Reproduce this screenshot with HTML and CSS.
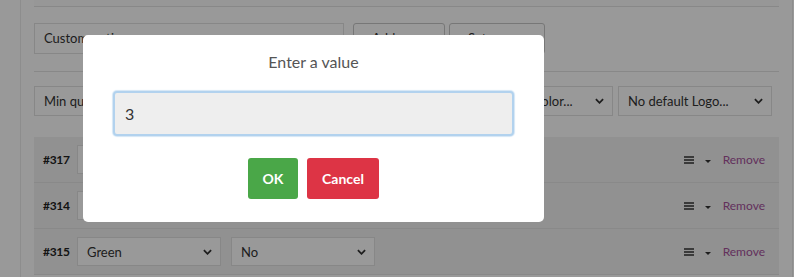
FILE: index.html
```html
<!DOCTYPE html>
<html lang="en">
<head>
    <meta charset="UTF-8">
    <title>Options</title>
    <link rel="stylesheet" href="styles.css">
</head>
<body>
<div class="page">
    <div class="top-box"></div>

    <div class="add-row">
        <div class="field custom">Custom option name</div>
        <div class="btn-ghost add">Add bullet</div>
        <div class="btn-ghost sub">Set defaults</div>
    </div>

    <div class="defaults">
        <div class="pick w1"><span>Min quantity...</span><svg class="chev" viewBox="0 0 10 6"><path d="M1 1l4 4 4-4" /></svg></div>
        <div class="pick w2"><span>No default Size...</span><svg class="chev" viewBox="0 0 10 6"><path d="M1 1l4 4 4-4" /></svg></div>
        <div class="pick w3"><span>No default Color...</span><svg class="chev" viewBox="0 0 10 6"><path d="M1 1l4 4 4-4" /></svg></div>
        <div class="pick w3"><span>No default Logo...</span><svg class="chev" viewBox="0 0 10 6"><path d="M1 1l4 4 4-4" /></svg></div>
    </div>

    <div class="list">
        <div class="item">
            <b class="num">#317</b>
            <div class="pick small"><span>Red</span><svg class="chev" viewBox="0 0 10 6"><path d="M1 1l4 4 4-4" /></svg></div>
            <div class="pick small"><span>Yes</span><svg class="chev" viewBox="0 0 10 6"><path d="M1 1l4 4 4-4" /></svg></div>
            <div class="tools">
                <svg class="burger" viewBox="0 0 10 8"><path d="M0 1h10M0 4h10M0 7h10" /></svg>
                <svg class="caret" viewBox="0 0 6 4"><path d="M0 0h6L3 3z" /></svg>
                <a href="#" class="remove">Remove</a>
            </div>
        </div>
        <div class="item">
            <b class="num">#314</b>
            <div class="pick small"><span>Blue</span><svg class="chev" viewBox="0 0 10 6"><path d="M1 1l4 4 4-4" /></svg></div>
            <div class="pick small"><span>No</span><svg class="chev" viewBox="0 0 10 6"><path d="M1 1l4 4 4-4" /></svg></div>
            <div class="tools">
                <svg class="burger" viewBox="0 0 10 8"><path d="M0 1h10M0 4h10M0 7h10" /></svg>
                <svg class="caret" viewBox="0 0 6 4"><path d="M0 0h6L3 3z" /></svg>
                <a href="#" class="remove">Remove</a>
            </div>
        </div>
        <div class="item">
            <b class="num">#315</b>
            <div class="pick small"><span>Green</span><svg class="chev" viewBox="0 0 10 6"><path d="M1 1l4 4 4-4" /></svg></div>
            <div class="pick small"><span>No</span><svg class="chev" viewBox="0 0 10 6"><path d="M1 1l4 4 4-4" /></svg></div>
            <div class="tools">
                <svg class="burger" viewBox="0 0 10 8"><path d="M0 1h10M0 4h10M0 7h10" /></svg>
                <svg class="caret" viewBox="0 0 6 4"><path d="M0 0h6L3 3z" /></svg>
                <a href="#" class="remove">Remove</a>
            </div>
        </div>
    </div>
</div>

<div id="mask"></div>
<div class="dialog">
    <div class="dialog-title">Enter a value</div>
    <div class="dialog-input">3</div>
    <div class="dialog-buttons">
        <div class="btn ok">OK</div>
        <div class="btn cancel">Cancel</div>
    </div>
</div>
</body>
</html>
```

FILE: styles.css
```css
*{
    margin: 0px;
    padding: 0px;
    box-sizing: border-box;
}
body{
    font-family: Lato, "Open Sans", sans-serif;
    font-size: 13px;
    color: #333;
    background: #fff;
    height: 277px;
    overflow: hidden;
}
.page{
    margin-left: 20px;
    width: 773px;
    height: 277px;
    border-left: 1px solid #ebebeb;
    border-right: 1px solid #ebebeb;
    padding: 0 13px;
}
.top-box{
    height: 7px;
    border-bottom: 1px solid #e3e3e3;
    background: #fcfcfc;
}
.add-row{
    display: flex;
    gap: 4px;
    padding: 16px 0 17px;
    border-bottom: 1px solid #e3e3e3;
}
.field{
    width: 310px;
    height: 31px;
    line-height: 29px;
    border: 1px solid #e2e2e2;
    padding-left: 9px;
    margin-right: 5px;
}
.btn-ghost{
    height: 31px;
    line-height: 29px;
    border: 1px solid #c6c6c6;
    border-radius: 3px;
    padding: 0 18px;
}
.btn-ghost.add{
    width: 92px;
}
.btn-ghost.sub{
    width: 96px;
}
.defaults{
    display: flex;
    gap: 5px;
    padding: 14px 6px 21px 0;
}
.pick{
    display: flex;
    align-items: center;
    justify-content: space-between;
    height: 30px;
    border: 1px solid #e2e2e2;
    padding: 0 8px 0 9px;
    background: #fff;
}
.pick.w1{
    width: 266px;
}
.pick.w2{
    width: 149px;
}
.pick.w3{
    width: 154px;
}
.chev{
    width: 9px;
    height: 6px;
    fill: none;
    stroke: #333;
    stroke-width: 2;
}
.list{
    background: #f2f2f2;
}
.item{
    display: flex;
    align-items: center;
    height: 46px;
    border-bottom: 1px solid #e4e4e4;
    padding-left: 9px;
    gap: 10px;
}
.num{
    font-size: 12px;
    letter-spacing: -0.3px;
    width: 24px;
    color: #222;
}
.pick.small{
    width: 144px;
    height: 29px;
}
.tools{
    margin-left: auto;
    display: flex;
    align-items: center;
    padding-right: 14px;
}
.burger{
    width: 10px;
    height: 8px;
    stroke: #333;
    stroke-width: 1.6;
}
.caret{
    width: 6px;
    height: 4px;
    fill: #333;
    margin: 4px 12px 0 11px;
}
.remove{
    color: #a5509a;
    text-decoration: none;
    font-size: 12px;
}
#mask{
    position: fixed;
    left: 0;
    top: 0;
    width: 100%;
    height: 100%;
    background: rgba(0, 0, 0, 0.4);
}
.dialog{
    position: fixed;
    left: 83px;
    top: 35px;
    width: 461px;
    height: 187px;
    background: #fff;
    border-radius: 5px;
    padding: 16px 30px 0;
}
.dialog-title{
    text-align: center;
    font-size: 16px;
    line-height: 22px;
    color: #555;
}
.dialog-input{
    margin-top: 18px;
    height: 45px;
    background: #eee;
    border: 2px solid #b2d2ee;
    border-radius: 4px;
    box-shadow: 0 0 1px 1px #d4e6f6;
    padding-left: 10px;
    font-size: 16px;
    line-height: 41px;
    color: #333;
}
.dialog-buttons{
    display: flex;
    justify-content: center;
    gap: 9px;
    margin-top: 22px;
}
.btn{
    height: 41px;
    line-height: 41px;
    border-radius: 3px;
    color: #fff;
    font-size: 14px;
    font-weight: bold;
    text-align: center;
}
.btn.ok{
    width: 50px;
    background: #4aa748;
}
.btn.cancel{
    width: 72px;
    background: #dd3445;
}
```
